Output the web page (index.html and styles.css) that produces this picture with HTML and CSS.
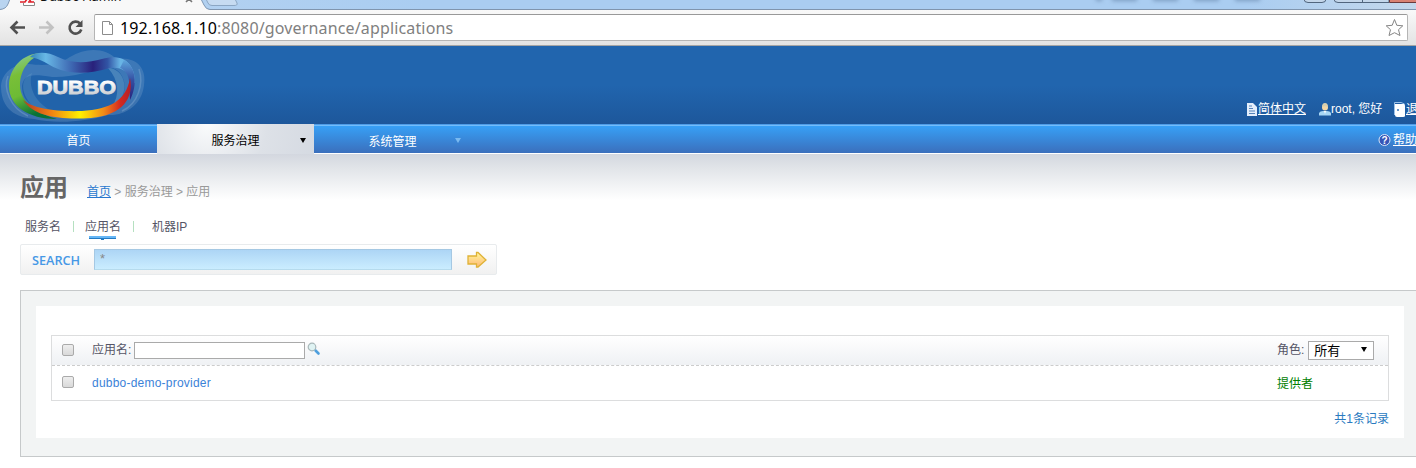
FILE: index.html
```html
<!DOCTYPE html>
<html lang="zh-CN">
<head>
    <meta charset="UTF-8">
    <title>Dubbo Admin</title>
    <link rel="stylesheet" href="styles.css">
</head>
<body>

    <div class="tabstrip">
        <svg class="tabstrip-bg" width="1416" height="10" viewBox="0 0 1416 10">
            <path d="M0 9.500H1416" stroke="#8095ae"/>
            <path d="M0 9.500Q6 9 8 4L10 -1H201L204 5Q206 9.500 210 9.500V11H0z" fill="#f8f8f8"/>
            <path d="M0 9.500Q6 9 8 4L10 -1M201 -1L204 5Q206 9.500 210 9.500" fill="none" stroke="#7f98b5"/>
            <path d="M206 -1L208 3Q209 5.500 212 5.500H234Q238 5.500 237 3L235 -1z" fill="#c6dbf1" stroke="#8ba6c3"/>
            <path d="M1304 -1Q1304 2.500 1308 2.500H1322Q1326 2.500 1326 -1z" fill="#c3d6ea" stroke="#51667e"/>
            <path d="M1334 -1Q1334 2.500 1338 2.500H1389V-1z" fill="#c3d6ea" stroke="#51667e"/>
            <path d="M1389.500 -1H1418V2.500H1389.500z" fill="#d98273" stroke="#6b3a3c"/>
            <path d="M1362.500 0V2" stroke="#51667e"/>
            <path d="M23.500 3V5.500H34.500V2" fill="#fff" stroke="#888"/>
            <path d="M20 2H25L27 -1M28 2H34M29 -1L31 2" fill="none" stroke="#e0202a" stroke-width="1.600"/>
            <path d="M186 2L192 -4M192 2L186 -4" stroke="#777" stroke-width="1.600"/>
        </svg>
        <span class="tab-title">Dubbo Admin</span>
        <div class="blurs"><i></i><i></i><i></i><i></i><i></i></div>
    </div>

    <div class="toolbar">
        <svg class="tools" width="94" height="35" viewBox="0 0 94 35">
            <path d="M11.500 17.500H25M17.500 11.500L11.500 17.500L17.500 23.500" fill="none" stroke="#505050" stroke-width="2.600"/>
            <path d="M39 17.500H52M46.500 11.500L52.500 17.500L46.500 23.500" fill="none" stroke="#c2c2c2" stroke-width="2.600"/>
            <path d="M80 13.500A6 6 0 1 0 81.300 19.500" fill="none" stroke="#505050" stroke-width="2.600"/>
            <path d="M82.500 10V17H75.500z" fill="#505050"/>
        </svg>
        <div class="address">
            <svg width="14" height="18" viewBox="0 0 14 18">
                <path d="M1.500 2.500H8.500L11.500 5.500V15.500H1.500zM8.500 2.500V5.500H11.500" fill="#fff" stroke="#8c8c8c"/>
            </svg>
            <span class="url"><b>192.168.1.10</b>:8080/governance/applications</span>
            <svg width="20" height="20" viewBox="0 0 20 20">
                <path d="M10.500 1.500L12.800 7.300L18.800 7.800L14.500 11.700L16 17.500L10.500 14.700L5 17.500L6.500 11.700L2.200 7.800L8.200 7.300z" fill="#fff" stroke="#858585" stroke-linejoin="round"/>
            </svg>
        </div>
    </div>

    <div class="header">
        <div class="logo">
            <svg width="150" height="78" viewBox="0 0 150 78">
                <defs>
                    <linearGradient id="green" x1="0" y1="0" x2=".3" y2="1">
                        <stop offset="0" stop-color="#8acbb0"/>
                        <stop offset=".35" stop-color="#79bf38"/>
                        <stop offset=".65" stop-color="#6dbb35"/>
                        <stop offset="1" stop-color="#087236"/>
                    </linearGradient>
                    <linearGradient id="blue" x1="0" x2="1">
                        <stop offset="0" stop-color="#3384b8"/>
                        <stop offset=".15" stop-color="#68b8e6"/>
                        <stop offset=".4" stop-color="#3d66b1"/>
                        <stop offset=".6" stop-color="#29217b"/>
                        <stop offset=".74" stop-color="#3155a5"/>
                        <stop offset=".86" stop-color="#69b5e5"/>
                        <stop offset="1" stop-color="#5da5dc"/>
                    </linearGradient>
                    <linearGradient id="fire" x1="0" x2="1">
                        <stop offset="0" stop-color="#b23a24"/>
                        <stop offset=".25" stop-color="#ef7d13"/>
                        <stop offset=".53" stop-color="#fff100"/>
                        <stop offset=".75" stop-color="#f08a18"/>
                        <stop offset=".9" stop-color="#d42a1f"/>
                        <stop offset="1" stop-color="#b5202a"/>
                    </linearGradient>
                    <linearGradient id="right" x1="0" y1="0" x2="0" y2="1">
                        <stop offset="0" stop-color="#5da5dc"/>
                        <stop offset=".5" stop-color="#3450a3"/>
                        <stop offset="1" stop-color="#29217b"/>
                    </linearGradient>
                    <linearGradient id="word" x1="0" y1="0" x2="0" y2="1">
                        <stop offset=".2" stop-color="#fff"/>
                        <stop offset="1" stop-color="#bfc3c8"/>
                    </linearGradient>
                </defs>
                <path d="M1 40C2 26 14 18 28 18C46 20 58 19 70 11C86 1 106 2 116 13C136 10 147 22 144 39C142 59 125 70 108 69C85 76 55 78 34 73C10 71 1 58 1 40z" fill="#87acd2" opacity=".28"/>
                <path d="M22 40C24 28 32 28 52 31C72 32 88 25 110 22C126 22 132 52 112 60C92 67 48 67 34 60C25 56 22 48 22 40z" fill="#2163aa"/>
                <path d="M108 22C126 22 132 50 112 61C120 49 119 34 108 22z" fill="#77abce" opacity=".45"/>
                <path d="M32 27C28 40 34 55 50 64L34 61C22 51 18 33 32 27z" fill="#77abce" opacity=".25"/>
                <path d="M8 30C3 42 10 62 28 70M139 23C144 38 138 58 122 65" fill="none" stroke="#87acd2" stroke-width="1.500" opacity=".4"/>
                <path d="M44 7C23 6 9 22 9 40C9 60 28 73 57 73C40 68 20 58 20 39C20 24 29 12 44 7z" fill="url(#green)"/>
                <path d="M30 11C36 5 48 6 58 11C71 18 88 17 102 13C124 7 135 18 135 37H131C130 25 121 21 110 22C96 26 83 28 70 26C52 24 45 13 30 11z" fill="url(#blue)"/>
                <path d="M124 14C136 20 138 39 130 54L129 35C128 28 125 24 120 22z" fill="url(#right)"/>
                <path d="M23 54C32 62 55 66 82 65C110 63 126 55 130 32C134 52 123 69 91 72C61 74 34 71 23 54z" fill="url(#fire)"/>
                <text class="logo-text" x="37" y="48" textLength="79" lengthAdjust="spacingAndGlyphs" fill="url(#word)" stroke="url(#word)">DUBBO</text>
            </svg>
        </div>
        <div class="user">
            <a class="lang" href="#"><svg width="12" height="13" viewBox="0 0 12 13">
                <path d="M1 0H7L11 4V13H1z" fill="#e4eefb"/>
                <path d="M3 3H6M3 5.500H7M3 8H9M3 10.500H9" stroke="#5584bb"/>
            </svg>简体中文</a>
            <span class="name"><svg width="12" height="13" viewBox="0 0 12 13">
                <path d="M0 12.500V10Q1 8 4 8H8Q11 8 12 10V12.500z" fill="#a8d6f4"/>
                <circle cx="6" cy="4.500" r="3" fill="#f3d7a6"/>
                <path d="M3 4Q3 0 6 0T9 4L6 3z" fill="#d8cfae"/>
                <path d="M5 8L6 11L7 8z" fill="#fff"/>
            </svg>root, 您好</span>
            <a class="logout" href="#"><svg width="13" height="17" viewBox="0 0 13 17">
                <path d="M1.500 14V1.500H8L11.500 3" fill="none" stroke="#9cc2e9"/>
                <path d="M2 3H11Q12 3 12 5V15Q12 16 10 16H4Q2 16 2 14z" fill="#fff"/>
                <circle cx="5" cy="9" r="1" fill="#3574b8"/>
            </svg>退出</a>
        </div>
    </div>

    <div class="nav">
        <a class="nav-item" href="#">首页</a>
        <a class="nav-item active" href="#">服务治理<span class="arrow"></span></a>
        <a class="nav-item low" href="#">系统管理<span class="arrow"></span></a>
        <a class="help" href="#"><svg width="14" height="14" viewBox="0 0 14 14">
            <circle cx="6.500" cy="7" r="5.500" fill="#3555b7" stroke="#d7e4f7"/>
            <text class="mark" x="6.500" y="10.500">?</text>
        </svg><u>帮助</u></a>
    </div>

    <div class="content">
        <div class="title-row">
            <h1>应用</h1>
            <div class="crumbs"><a href="#">首页</a> &gt; 服务治理 &gt; 应用</div>
        </div>

        <div class="tabs">
            <a href="#">服务名</a>
            <a class="current" href="#">应用名</a>
            <a href="#">机器IP</a>
        </div>

        <form class="search">
            <label for="keyword">SEARCH</label>
            <input type="text" id="keyword" value="*">
            <svg width="20" height="18" viewBox="0 0 20 18">
                <defs>
                    <linearGradient id="go" x1="0" y1="0" x2="0" y2="1">
                        <stop offset="0" stop-color="#fff79a"/>
                        <stop offset="1" stop-color="#ffb878"/>
                    </linearGradient>
                </defs>
                <path d="M1 5H9.500V1.500H11L19 9L11 16H9.500V13H1z" fill="url(#go)" stroke="#dfb236" stroke-width="1.300"/>
            </svg>
        </form>

        <div class="panel">
            <div class="panel-inner">
                <div class="grid">
                    <div class="row head">
                        <span class="check"></span>
                        <div class="app">应用名:
                            <input type="text" class="filter">
                            <svg width="14" height="14" viewBox="0 0 14 14">
                                <path d="M8.500 8.500L11.500 11.500" stroke="#4e9fdd" stroke-width="2.600" stroke-linecap="round"/>
                                <circle cx="5" cy="5" r="3.800" fill="#dff3f3" stroke="#a9b8ba" stroke-width="1.200"/>
                            </svg>
                        </div>
                        <div class="role">角色: <span class="select">所有<span class="arrow"></span></span></div>
                    </div>
                    <div class="row">
                        <span class="check"></span>
                        <div class="app"><a href="#">dubbo-demo-provider</a></div>
                        <div class="role provider">提供者</div>
                    </div>
                </div>
                <div class="total">共1条记录</div>
            </div>
        </div>
    </div>

</body>
</html>
```

FILE: styles.css
```css
* {
    box-sizing: border-box;
}

body {
    font-family: "Liberation Sans", "Noto Sans CJK SC", sans-serif;
    font-size: 12px;
    line-height: 18px;
    margin: 0;
    width: 1416px;
    height: 468px;
    overflow: hidden;
    background-color: #fff;
    color: #556;
}

svg {
    display: block;
    flex: none;
}

a {
    color: inherit;
    text-decoration: none;
}

/* browser chrome */
.tabstrip {
    position: relative;
    height: 10px;
    overflow: hidden;
    background: linear-gradient(90deg, #b9d4f0, #aacdf1 30%, #aacdf1 88%, #c4d8ec);
}

.tabstrip-bg {
    position: absolute;
    left: 0;
    top: 0;
}

.tab-title {
    position: absolute;
    left: 40px;
    top: -12px;
    font-family: "Noto Sans", sans-serif;
    font-size: 12.500px;
    color: #111;
}

.blurs {
    position: absolute;
    left: 1096px;
    top: -5px;
    display: flex;
    gap: 16px;
}

.blurs i {
    width: 25px;
    height: 6px;
    background-color: #506d92;
    opacity: .5;
    filter: blur(2px);
}

.blurs i:first-child {
    width: 6px;
    margin-right: -6px;
}

.toolbar {
    display: flex;
    height: 36px;
    background: linear-gradient(#f9f9f9, #e3e3e3);
    border-bottom: 1px solid #a5a5a5;
}

.address {
    display: flex;
    align-items: center;
    width: 1314px;
    height: 27px;
    margin-top: 4px;
    padding: 0 3px 0 6px;
    border: 1px solid #b5b5b5;
    border-top-color: #999;
    border-radius: 2px;
    background-color: #fff;
}

.url {
    flex: 1;
    margin-left: 5px;
    font-family: "Noto Sans", sans-serif;
    font-size: 16px;
    letter-spacing: .15px;
    color: #808080;
}

.url b {
    font-weight: normal;
    color: #000;
}

/* header */
.header {
    display: flex;
    justify-content: space-between;
    height: 78px;
    background: linear-gradient(#2165ae 50%, #1d579b);
}

.user {
    display: flex;
    align-items: center;
    flex: none;
    width: 170px;
    height: 18px;
    margin-top: 54px;
    color: #fff;
    white-space: nowrap;
}

.user a,
.user .name {
    display: flex;
    align-items: center;
    flex: none;
}

.user a {
    text-decoration: underline;
}

.user .lang {
    width: 73px;
}

.user .name {
    width: 74px;
}

.logo-text {
    font-family: "Liberation Sans", sans-serif;
    font-size: 19px;
    font-weight: bold;
    stroke-width: .8px;
}

.nav {
    display: flex;
    height: 30px;
    border-top: 1px solid #4e9ce6;
    border-bottom: 1px solid #fff;
    background: linear-gradient(#73bdfb 1px, #37a0f6 1px, #3b6fbc);
    color: #fff;
}

.nav-item {
    position: relative;
    width: 157px;
    line-height: 33px;
    text-align: center;
}

.nav-item.active {
    height: 30px;
    margin-top: -1px;
    line-height: 35px;
    color: #000;
    background: radial-gradient(circle at 50px 0, #fafbfc, #dde1e7 60px, #d5dae2);
}

.nav-item.low {
    line-height: 35px;
}

.arrow {
    position: absolute;
    right: 8px;
    top: 14px;
    border: 3px solid transparent;
    border-top: 5px solid #000;
    border-bottom: 0;
}

.low .arrow {
    right: 10px;
    top: 13px;
    border-top-color: #7abaf1;
}

.help {
    display: flex;
    align-items: center;
    margin-left: auto;
    padding-top: 2px;
    width: 38px;
    white-space: nowrap;
}

.mark {
    font-size: 10px;
    font-weight: bold;
    fill: #fff;
    text-anchor: middle;
}

.help u {
    margin-left: 1px;
}

/* page content */
.content {
    height: 314px;
    padding-left: 20px;
    background: linear-gradient(#d3d7df, #e2e5e9 15px, #fff 46px);
}

.title-row {
    display: flex;
    height: 60px;
}

h1 {
    margin: 16px 19px 0 0;
    font-size: 24px;
    line-height: 36px;
    color: #666;
}

.crumbs {
    margin-top: 29px;
    color: #999;
}

.crumbs a {
    color: #2878ce;
    text-decoration: underline;
}

.tabs {
    display: flex;
    height: 30px;
    padding-left: 5px;
}

.tabs a {
    position: relative;
    width: 60px;
    height: 25px;
    line-height: 26px;
}

.tabs a:last-child {
    margin-left: 7px;
}

.tabs a:not(:last-child)::after {
    content: "";
    position: absolute;
    left: 48px;
    top: 7px;
    width: 1px;
    height: 11px;
    background-color: #b5e0c0;
}

.tabs .current::before {
    content: "";
    position: absolute;
    left: 4px;
    top: 22px;
    width: 27px;
    height: 3px;
    background: linear-gradient(#65b6f6 2px, #237bc4 2px);
}

/* small pointer under the current tab */
.tabs .current {
    background: linear-gradient(#237bc4, #237bc4) 16px 100% / 3px 1px no-repeat;
    height: 26px;
}

.search {
    display: flex;
    align-items: center;
    width: 477px;
    height: 31px;
    padding-left: 11px;
    border: 1px solid #e8ebed;
    border-radius: 2px;
    background: linear-gradient(#fff, #f1f1f1);
}

.search label {
    width: 62px;
    font-family: "Open Sans", sans-serif;
    font-size: 12.700px;
    font-weight: 600;
    color: #4698e6;
}

.search input {
    width: 358px;
    height: 21px;
    margin-right: 15px;
    padding: 0 5px 3px;
    border: 1px solid #a5c8e3;
    border-bottom-color: #b6dbed;
    font-family: "Liberation Sans", sans-serif;
    font-size: 13px;
    color: #888;
    background: linear-gradient(#add5f5, #caedff);
}

.panel {
    width: 1416px;
    height: 167px;
    margin-top: 15px;
    padding: 15px;
    border: 1px solid #c6c9ca;
    background-color: #f2f4f4;
}

.panel-inner {
    width: 1368px;
    height: 132px;
    padding: 29px 15px 0;
    background-color: #fff;
}

.grid {
    height: 66px;
    border: 1px solid #dcddde;
}

.row {
    display: flex;
    align-items: center;
    height: 34px;
    padding-left: 10px;
}

.row.head {
    height: 30px;
    padding-bottom: 1px;
    border-bottom: 1px dashed #ccc;
    background: linear-gradient(#fff, #eff1f4);
}

.check {
    width: 12px;
    height: 12px;
    border: 1px solid #aaa;
    border-radius: 2px;
    background: linear-gradient(#eee, #d9d9d9);
}

.row:last-child .check {
    margin-bottom: 2px;
}

.app {
    display: flex;
    align-items: center;
    flex: 1;
    margin-left: 18px;
}

.app a {
    letter-spacing: .22px;
    color: #3b82d8;
}

.filter {
    width: 171px;
    height: 17px;
    margin: 0 3px;
    border: 1px solid #aaa;
}

.app svg {
    margin: 0 0 3px -1px;
}

.role {
    display: flex;
    align-items: center;
    width: 111px;
}

.select {
    position: relative;
    width: 66px;
    height: 19px;
    margin-left: 4px;
    padding-left: 5px;
    border: 1px solid #aaa;
    font-size: 13px;
    line-height: 17px;
    color: #000;
    background-color: #fff;
}

.select .arrow {
    right: 6px;
    top: 5px;
}

.provider {
    padding-top: 1px;
    color: #008000;
}

.total {
    margin-top: 9px;
    text-align: right;
    color: #2a7abf;
}
```
